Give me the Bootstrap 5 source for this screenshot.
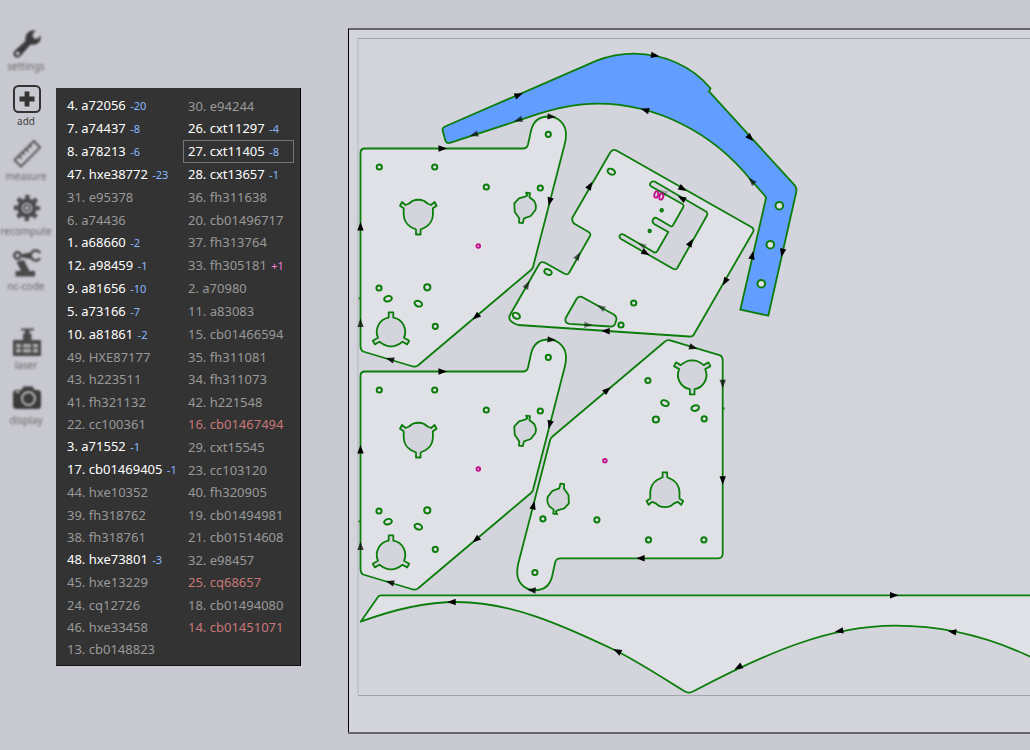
<!DOCTYPE html>
<html lang="en">
<head>
<meta charset="utf-8">
<meta name="viewport" content="width=device-width, initial-scale=1">
<title>Nesting</title>
<link href="https://cdn.jsdelivr.net/npm/bootstrap@5.3.0/dist/css/bootstrap.min.css" rel="stylesheet">
<style>
  body { background: #c8c8d0; font-family: "Noto Sans", "Open Sans", sans-serif; color: #333; }
  .tools { width: 52px; padding-top: 28px; }
  .tool { height: 55px; font-size: 10px; line-height: 14px; color: #555; filter: blur(1px); opacity: .85; }
  .tool.active { color: #444; filter: none; opacity: 1; }
  .tool svg { width: 30px; height: 30px; margin: 0 0 1px 2px; }
  .parts { width: 245px; height: 77vh; margin: 88px 0 0 4px; padding: 6px 6px 4px; background: #333;
    border-right: 1px solid #000; border-bottom: 1px solid #111;
    grid-template: repeat(25, 1fr) / 121px 111px; grid-auto-flow: column; }
  .part { padding: 0 4px; font-size: 13px; line-height: 20px; color: #999; border: 1px solid transparent; }
  .part.used { color: #fff; }
  .part.bad { color: #c87878; }
  .part.current { border-color: #777; }
  .part small { margin-left: 1px; font-size: 11px; color: #8ab8ff; }
  .part small.extra { color: #f080d8; }
  .sheet { margin: 28px 0 0 47px; min-width: 0; }
  .shape { fill: #e0e1e6; stroke: #0b7d0b; stroke-width: 1.8; stroke-linejoin: round; }
  .cut { fill: #d4d4dc; stroke: #0b7d0b; stroke-width: 1.8; stroke-linejoin: round; }
  .hole { fill: #e0e1e6; stroke: #0b7d0b; stroke-width: 2; }
  .mark-line { fill: #e0e1e6; stroke: #c4108c; stroke-width: 1.9; }
</style>
</head>
<body>
<main class="d-flex align-items-start overflow-hidden min-vh-100">

  <nav class="tools d-flex flex-column flex-shrink-0" aria-label="Tools">
    <button type="button" class="tool btn p-0 border-0 d-flex flex-column align-items-center">
      <svg viewBox="0 0 30 30"><path d="M3 22.500 13.500 13C12.500 6 17.500 1.300 23.500 2.500L20.500 6.500 21.500 10.300 25 11 28.500 7.500C30 13.500 24.500 18 18.500 16.500L8.500 28C4 32-1 27 3 22.500ZM5.700 23.600A1.900 1.900 0 1 0 5.800 27.400 1.900 1.900 0 0 0 5.700 23.600Z" fill="#222" fill-rule="evenodd"/></svg>
      <span>settings</span></button>
    <button type="button" class="tool active btn p-0 border-0 d-flex flex-column align-items-center">
      <svg viewBox="0 0 30 30"><rect x="2" y="3" width="26" height="26" rx="4.500" fill="none" stroke="#333" stroke-width="2"/><path d="M12.600 8.500h4.800v5.100h5.100v4.800h-5.100v5.100h-4.800v-5.100H7.500v-4.800h5.100Z" fill="#333"/></svg>
      <span>add</span></button>
    <button type="button" class="tool btn p-0 border-0 d-flex flex-column align-items-center">
      <svg viewBox="0 0 30 30" fill="none" stroke="#444" stroke-width="2"><path d="M2.500 22 22 3 28 9.500 9 28.500ZM7 18l2.500 2.500M10.500 14.500l2 2M14 11l2.500 2.500M17.500 7.500l2 2"/></svg>
      <span>measure</span></button>
    <button type="button" class="tool btn p-0 border-0 d-flex flex-column align-items-center">
      <svg viewBox="0 0 30 30" fill="none" stroke="#333"><circle cx="15" cy="15" r="7.500" stroke-width="4.500"/><circle cx="15" cy="15" r="11.200" stroke-width="3.800" stroke-dasharray="4.400 4.400" stroke-dashoffset="2.200"/><circle cx="15" cy="15" r="2.800" stroke-width="1.800"/></svg>
      <span>recompute</span></button>
    <button type="button" class="tool btn p-0 border-0 d-flex flex-column align-items-center mb-4">
      <svg viewBox="0 0 30 30"><circle cx="5.500" cy="7.500" r="3.200" fill="none" stroke="#333" stroke-width="2.500"/><path d="M28 5A5 5 0 1 0 28 10" fill="none" stroke="#333" stroke-width="2.500"/><path d="M10 6 18 4.500V11L10 9.500Z" fill="#333"/><path d="M4.500 13.500 12 12 17.500 23H23v5.500H3.500V23H9Z" fill="#333"/></svg>
      <span>nc-code</span></button>
    <button type="button" class="tool btn p-0 border-0 d-flex flex-column align-items-center">
      <svg viewBox="0 0 30 30"><path d="M9 1.500h13v2h-4.500v3h2V13H29v16H1V13h10V6.500h2v-3H9Z" fill="#333"/><path d="M4 17h5v3.500H4ZM11 17h8v3.500h-8ZM21 17h5v3.500h-5ZM4 22h5v3.500H4ZM11 22h8v3.500h-8ZM21 22h5v3.500h-5Z" fill="#aaa"/></svg>
      <span>laser</span></button>
    <button type="button" class="tool btn p-0 border-0 d-flex flex-column align-items-center">
      <svg viewBox="0 0 30 30"><path d="M4.500 8H9.500l2-3.500h9l2 3.500h3Q29 8 29 11.500v12Q29 27 25.500 27h-21Q1 27 1 23.500v-12Q1 8 4.500 8Z" fill="#222"/><circle cx="16.500" cy="16.500" r="6.500" fill="none" stroke="#bbb" stroke-width="2"/><path d="M4 10h3.500" stroke="#bbb" stroke-width="2"/></svg>
      <span>display</span></button>
  </nav>

  <section class="parts d-grid flex-shrink-0" aria-label="Parts">
    <button type="button" class="part used btn text-start text-nowrap rounded-0">4. a72056 <small>-20</small></button>
    <button type="button" class="part used btn text-start text-nowrap rounded-0">7. a74437 <small>-8</small></button>
    <button type="button" class="part used btn text-start text-nowrap rounded-0">8. a78213 <small>-6</small></button>
    <button type="button" class="part used btn text-start text-nowrap rounded-0">47. hxe38772 <small>-23</small></button>
    <button type="button" class="part btn text-start text-nowrap rounded-0">31. e95378</button>
    <button type="button" class="part btn text-start text-nowrap rounded-0">6. a74436</button>
    <button type="button" class="part used btn text-start text-nowrap rounded-0">1. a68660 <small>-2</small></button>
    <button type="button" class="part used btn text-start text-nowrap rounded-0">12. a98459 <small>-1</small></button>
    <button type="button" class="part used btn text-start text-nowrap rounded-0">9. a81656 <small>-10</small></button>
    <button type="button" class="part used btn text-start text-nowrap rounded-0">5. a73166 <small>-7</small></button>
    <button type="button" class="part used btn text-start text-nowrap rounded-0">10. a81861 <small>-2</small></button>
    <button type="button" class="part btn text-start text-nowrap rounded-0">49. HXE87177</button>
    <button type="button" class="part btn text-start text-nowrap rounded-0">43. h223511</button>
    <button type="button" class="part btn text-start text-nowrap rounded-0">41. fh321132</button>
    <button type="button" class="part btn text-start text-nowrap rounded-0">22. cc100361</button>
    <button type="button" class="part used btn text-start text-nowrap rounded-0">3. a71552 <small>-1</small></button>
    <button type="button" class="part used btn text-start text-nowrap rounded-0">17. cb01469405 <small>-1</small></button>
    <button type="button" class="part btn text-start text-nowrap rounded-0">44. hxe10352</button>
    <button type="button" class="part btn text-start text-nowrap rounded-0">39. fh318762</button>
    <button type="button" class="part btn text-start text-nowrap rounded-0">38. fh318761</button>
    <button type="button" class="part used btn text-start text-nowrap rounded-0">48. hxe73801 <small>-3</small></button>
    <button type="button" class="part btn text-start text-nowrap rounded-0">45. hxe13229</button>
    <button type="button" class="part btn text-start text-nowrap rounded-0">24. cq12726</button>
    <button type="button" class="part btn text-start text-nowrap rounded-0">46. hxe33458</button>
    <button type="button" class="part btn text-start text-nowrap rounded-0">13. cb0148823</button>
    <button type="button" class="part btn text-start text-nowrap rounded-0">30. e94244</button>
    <button type="button" class="part used btn text-start text-nowrap rounded-0">26. cxt11297 <small>-4</small></button>
    <button type="button" class="part used current btn text-start text-nowrap rounded-0">27. cxt11405 <small>-8</small></button>
    <button type="button" class="part used btn text-start text-nowrap rounded-0">28. cxt13657 <small>-1</small></button>
    <button type="button" class="part btn text-start text-nowrap rounded-0">36. fh311638</button>
    <button type="button" class="part btn text-start text-nowrap rounded-0">20. cb01496717</button>
    <button type="button" class="part btn text-start text-nowrap rounded-0">37. fh313764</button>
    <button type="button" class="part btn text-start text-nowrap rounded-0">33. fh305181 <small class="extra">+1</small></button>
    <button type="button" class="part btn text-start text-nowrap rounded-0">2. a70980</button>
    <button type="button" class="part btn text-start text-nowrap rounded-0">11. a83083</button>
    <button type="button" class="part btn text-start text-nowrap rounded-0">15. cb01466594</button>
    <button type="button" class="part btn text-start text-nowrap rounded-0">35. fh311081</button>
    <button type="button" class="part btn text-start text-nowrap rounded-0">34. fh311073</button>
    <button type="button" class="part btn text-start text-nowrap rounded-0">42. h221548</button>
    <button type="button" class="part bad btn text-start text-nowrap rounded-0">16. cb01467494</button>
    <button type="button" class="part btn text-start text-nowrap rounded-0">29. cxt15545</button>
    <button type="button" class="part btn text-start text-nowrap rounded-0">23. cc103120</button>
    <button type="button" class="part btn text-start text-nowrap rounded-0">40. fh320905</button>
    <button type="button" class="part btn text-start text-nowrap rounded-0">19. cb01494981</button>
    <button type="button" class="part btn text-start text-nowrap rounded-0">21. cb01514608</button>
    <button type="button" class="part btn text-start text-nowrap rounded-0">32. e98457</button>
    <button type="button" class="part bad btn text-start text-nowrap rounded-0">25. cq68657</button>
    <button type="button" class="part btn text-start text-nowrap rounded-0">18. cb01494080</button>
    <button type="button" class="part bad btn text-start text-nowrap rounded-0">14. cb01451071</button>
  </section>

  <section class="sheet flex-grow-1" aria-label="Sheet">
    <svg class="d-block w-100" viewBox="348 28 682 706" role="img" aria-label="Nested parts on the sheet">
      <defs>
        <path id="arrow" d="M-4-3.200 4.500 0-4 3.200Z"/>
        <ellipse id="slot" rx="3.900" ry="2.700" class="hole"/>
        <g id="plate">
          <path class="shape" d="M360.500 153Q360.500 148.500 365 148.500H523Q527 148.500 528 144.500L531.200 130C533.500 121 540 116.500 548.500 116.500 559 116.500 566 125 566 134Q566 139 565 143L533 267Q532.500 268.500 531 270L418.500 365Q416.500 367.200 413 366.500L363 351.500Q360.500 350 360.500 346Z"/>
          <path class="cut" transform="translate(418.300 214)" d="M-14.600-5.700-18.300-8.300-16.300-12-12.700-9Q-9-10-6-13 0-15.500 6-13 9-10 12.700-9L16.300-12 18.300-8.300 14.600-5.700V1Q14 9 7.500 13L2.300 15.500V20.500H-2.300V15.500L-7.500 13Q-14 9-14.600 1Z"/>
          <path class="cut" transform="translate(391 331.700)" d="M-2.300-14V-19.300H2.300V-14A14.300 14.300 0 0 1 13 6L18.200 9 16.200 12.700 11.500 10Q5 15 0 14.600-5 15-11.500 10L-16.200 12.700-18.200 9-13 6A14.300 14.300 0 0 1-2.300-14Z"/>
          <path class="cut" transform="translate(525 207.700)" d="M1-15 5-14.500 4.500-10.500 9-7Q12-2 10.300 2.500L5.700 8.300-1 10.700-2.300 15.500-6 15-5.700 10.700-10.300 4-10.700-4.300-6-9.300 0-11 2.500-12.500Z"/>
          <g class="hole"><circle cx="379.300" cy="167" r="2.600"/><circle cx="434.700" cy="167" r="2.600"/><circle cx="486.300" cy="187" r="2.600"/><circle cx="540.300" cy="188" r="2.600"/><circle cx="548.300" cy="134.300" r="2.600"/><circle cx="379" cy="288" r="2.600"/><circle cx="427.300" cy="287.300" r="3.100"/><circle cx="435.300" cy="326.300" r="2.600"/></g>
          <use href="#slot" transform="translate(388 298.700) rotate(-15)"/>
          <use href="#slot" transform="translate(418.300 303.700) rotate(22)"/>
          <circle class="mark-line" cx="478.300" cy="246" r="1.800"/>
          <path class="shape" d="M358.500 298.300H360"/>
          <use href="#arrow" transform="translate(442.500 148.500)"/>
          <use href="#arrow" transform="translate(551.500 116.700) rotate(5)" opacity=".85"/>
          <use href="#arrow" transform="translate(549.700 201.500) rotate(104)"/>
          <use href="#arrow" transform="translate(476 316.700) rotate(140)"/>
          <use href="#arrow" transform="translate(390 359.300) rotate(197)" opacity=".85"/>
          <use href="#arrow" transform="translate(360.500 323) rotate(-90)" opacity=".7"/>
          <use href="#arrow" transform="translate(360.500 226.500) rotate(-90)"/>
        </g>
      </defs>

      <rect x="348.500" y="29" width="720" height="704" fill="#d4d4dc" stroke="#000"/>
      <path d="M348 733H1030" stroke="#666" stroke-width="2"/>
      <path d="M358 38.500H1030M358 695.500H1030" fill="none" stroke="#a2a2aa"/>
      <path d="M358 39V695" stroke="#c4c4cc" stroke-width="2"/>

      <use href="#plate"/>
      <use href="#plate" transform="translate(0 223)"/>
      <use href="#plate" transform="rotate(180 541.600 353.400)"/>

      <!-- slotted bracket -->
      <path class="shape" d="M610.500 152Q612.500 149 616 150.300L751.700 227.300Q754.500 229 753 232L694 334.300Q692.700 337 689 336.500L518.300 325Q506 321 510.500 314L539.300 264Q541 261 545 262.700L565 274Q567.500 275 569 273L590 236Q591 234 589 232.300L574 223.500Q571.500 221 572.500 217.500Z"/>
      <path class="cut" d="M651.300 186.500C648.500 184.500 651 180.500 654.500 181.500L706 211.500Q708 213 707 215.500L677.300 268Q676 270 673.500 269L621 239C618 237 620 233 623.500 234.500L654 252.300Q656 253 657.200 251.300L668.300 232 654.500 224.200C650.500 221.500 653.500 216.500 657 218.200L670.700 226.300Q672 226.800 673 225.300L683.300 207Q684 205 682.300 204Z"/>
      <path class="cut" d="M576.500 299Q578.500 295.500 582.500 297.200L614.300 314.700Q617 317 616.300 320L615 324Q614 326.800 610 326.500L569.500 323.800Q564 323 565.700 318Z"/>
      <g class="hole"><circle cx="661.700" cy="210.300" r="1.200"/><circle cx="649.700" cy="231" r="1.200"/><circle cx="633.700" cy="303" r="2.600"/><circle cx="621" cy="325" r="2.600"/></g>
      <use href="#slot" transform="translate(611.300 171.700) rotate(25)"/>
      <use href="#slot" transform="translate(548 272) rotate(25)"/>
      <use href="#slot" transform="translate(516.300 315.700) rotate(30)"/>
      <g class="mark-line"><ellipse rx="1.900" ry="3.200" transform="translate(656.300 194.500) rotate(15)"/><ellipse rx="1.900" ry="3.200" transform="translate(661.300 196.500) rotate(15)"/></g>
      <use href="#arrow" transform="translate(590 185.700) rotate(-60)"/>
      <use href="#arrow" transform="translate(682.700 188.700) rotate(30)"/>
      <use href="#arrow" transform="translate(681.700 198.300) rotate(210)"/>
      <use href="#arrow" transform="translate(663.300 192) rotate(210)" opacity=".2"/>
      <use href="#arrow" transform="translate(690.700 242.700) rotate(-60)"/>
      <use href="#arrow" transform="translate(645.700 253) rotate(30)"/>
      <use href="#arrow" transform="translate(641.700 245) rotate(210)" opacity=".35"/>
      <use href="#arrow" transform="translate(725 281.700) rotate(120)"/>
      <use href="#arrow" transform="translate(605.700 331) rotate(183)"/>
      <use href="#arrow" transform="translate(527.300 285) rotate(-60)" opacity=".6"/>
      <use href="#arrow" transform="translate(578 256) rotate(-60)" opacity=".6"/>
      <use href="#arrow" transform="translate(601 307.300) rotate(210)" opacity=".45"/>
      <use href="#arrow" transform="translate(588.300 325) rotate(3)" opacity=".45"/>

      <!-- selected arm -->
      <path class="shape" style="fill:#619eff" d="M442.500 130Q442.500 127.500 445 126.500L596.700 60.700C610 55.500 622 53.700 634 53.700 664 54 692 66 710.500 88.300L709 91.300 795 185.700Q796.800 188 796.300 191.700L768.300 315.700 740.300 309.700 766 198.300Q766 196.500 764.300 195L751.700 181C712 131 655 104 598 103.700 570 103.700 545 111.500 530 116.700L450.700 142.700Q447 144 445.500 141Z"/>
      <g class="hole"><circle cx="779.300" cy="205.700" r="3.800"/><circle cx="770.300" cy="244.700" r="3.800"/><circle cx="761.300" cy="283.700" r="3.800"/></g>
      <use href="#arrow" transform="translate(518.700 95) rotate(-23)"/>
      <use href="#arrow" transform="translate(655 55.500) rotate(8)"/>
      <use href="#arrow" transform="translate(750.300 138) rotate(47)"/>
      <use href="#arrow" transform="translate(645 110) rotate(195)"/>
      <use href="#arrow" transform="translate(518.300 120) rotate(163)" opacity=".65"/>
      <use href="#arrow" transform="translate(474 134.700) rotate(162)" opacity=".65"/>
      <use href="#arrow" transform="translate(751.700 181) rotate(227)" opacity=".65"/>
      <use href="#arrow" transform="translate(782.300 252.700) rotate(102)"/>
      <use href="#arrow" transform="translate(752.300 255.300) rotate(-78)"/>

      <!-- long curved rail -->
      <path class="shape" d="M360.700 621.700 378.300 596.500Q379 595.300 381 595.300H1040V661.500C990 636 940 625.700 895 625.700 830 626 770 651 693.500 691.300Q689 694 684.500 691.300C660 676 640 663 616.700 651 560 624 510 602 456.700 602 425 602 395 609 360.700 621.700Z"/>
      <use href="#arrow" transform="translate(451.700 602) rotate(180)"/>
      <use href="#arrow" transform="translate(617.300 651) rotate(206)"/>
      <use href="#arrow" transform="translate(894 595.300)"/>
      <use href="#arrow" transform="translate(839.300 631) rotate(170)"/>
      <use href="#arrow" transform="translate(952.300 631.700) rotate(190)"/>
      <use href="#arrow" transform="translate(738.300 667.300) rotate(152)"/>
    </svg>
  </section>
</main>
<script src="https://cdn.jsdelivr.net/npm/bootstrap@5.3.0/dist/js/bootstrap.bundle.min.js"></script>
</body>
</html>
